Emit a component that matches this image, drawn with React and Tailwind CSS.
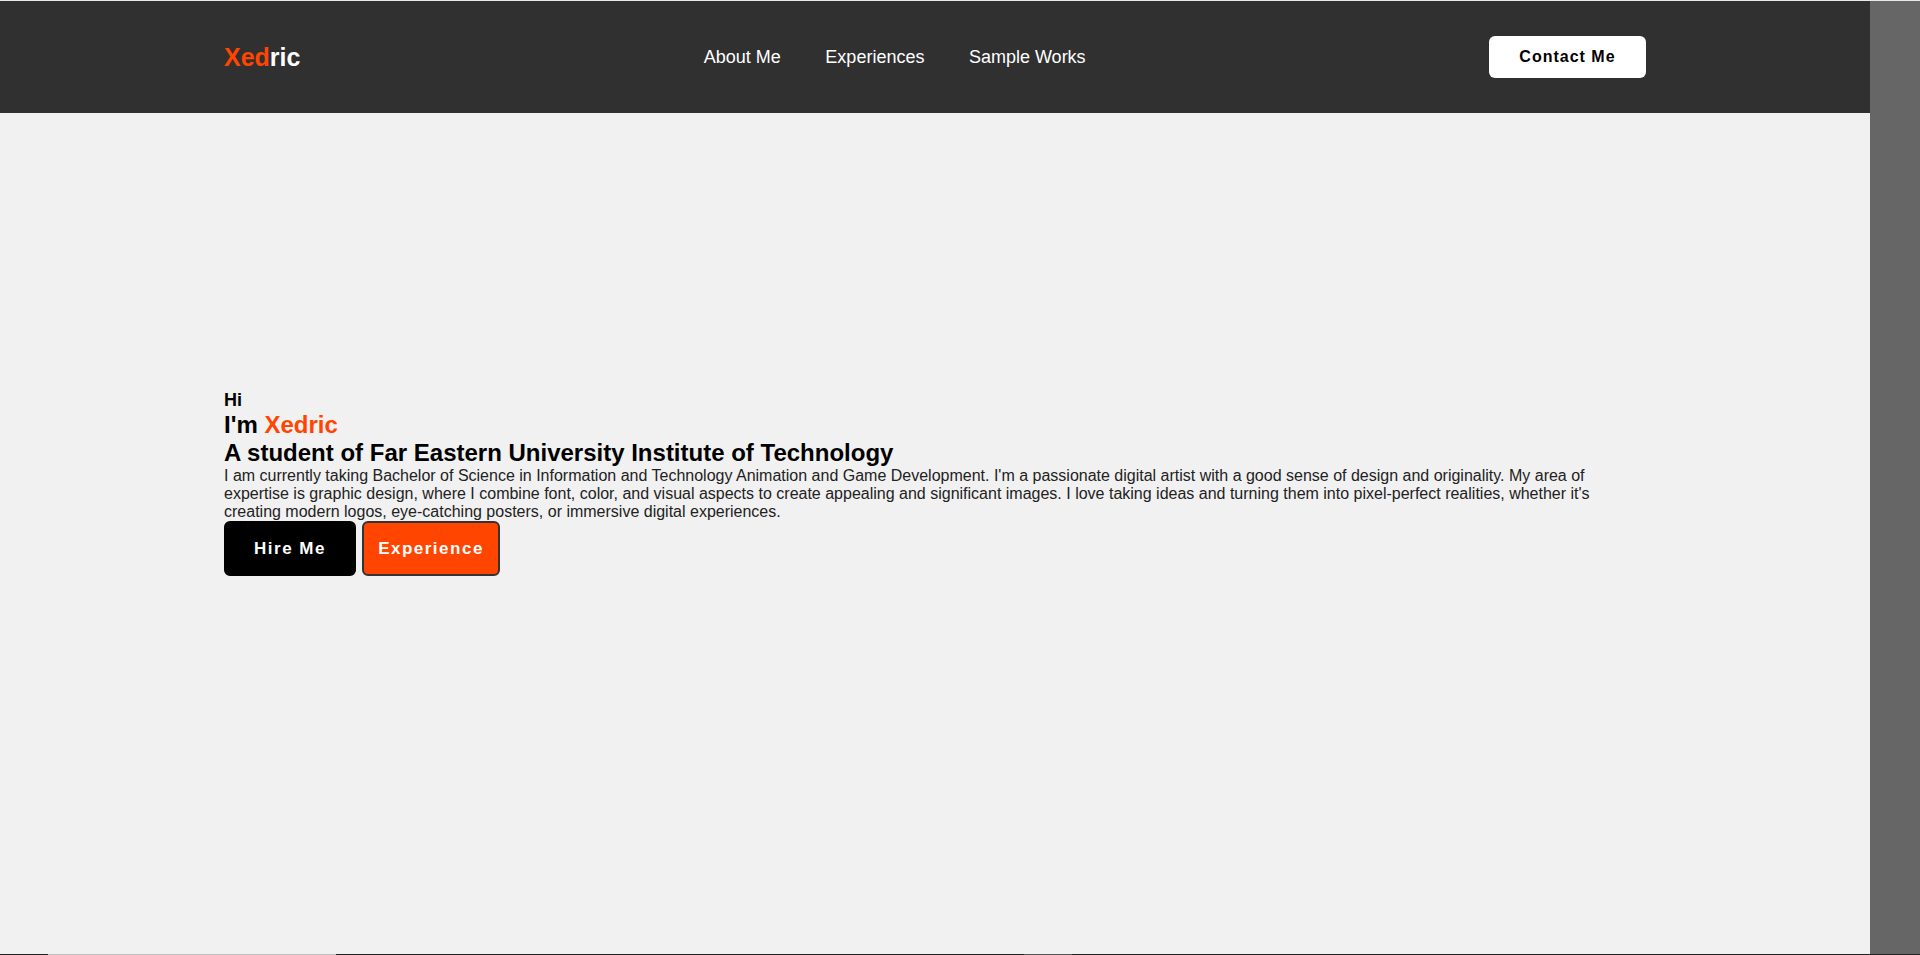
export default function App() {
  const navLinks = ["About Me", "Experiences", "Sample Works"];

  return (
    <div className="flex h-[955px] flex-col overflow-hidden bg-[#f1f1f1] font-['Liberation_Sans',Arial,sans-serif] leading-[normal] text-black">
      {/* thin top edge */}
      <div className="h-px shrink-0 bg-[#e9e9e9]" />

      <div className="flex min-h-0 flex-1">
        <div className="flex min-w-0 flex-1 flex-col">
          {/* HEADER */}
          <header className="h-[112px] shrink-0 bg-[#303030]">
            <div className="mx-auto flex h-full w-[1422px] items-center justify-between">
              <a href="#" className="text-[25px] font-bold text-white">
                <span className="text-[#ff4500]">Xed</span>ric
              </a>

              <nav className="flex items-center gap-[44.5px]">
                {navLinks.map((link) => (
                  <a key={link} href="#" className="text-[18px] text-white">
                    {link}
                  </a>
                ))}
              </nav>

              <button className="flex h-[42px] w-[157px] items-center justify-center rounded-md bg-white text-[16px] font-bold tracking-[1px] text-black">
                Contact Me
              </button>
            </div>
          </header>

          {/* HERO */}
          <main className="flex-1 pt-[277px]">
            <div className="mx-auto w-[1422px]">
              <h3 className="text-[18px] font-bold">Hi</h3>
              <h2 className="text-[24px] font-bold">
                I'm <span className="text-[#ff4500]">Xedric</span>
              </h2>
              <h1 className="text-[24px] font-bold">
                A student of Far Eastern University Institute of Technology
              </h1>
              <p className="text-[16px] text-[#222]">
                I am currently taking Bachelor of Science in Information and
                Technology Animation and Game Development. I'm a passionate
                digital artist with a good sense of design and originality. My
                area of expertise is graphic design, where I combine font, color,
                and visual aspects to create appealing and significant images. I
                love taking ideas and turning them into pixel-perfect realities,
                whether it's creating modern logos, eye-catching posters, or
                immersive digital experiences.
              </p>

              <div className="flex gap-[6px]">
                <button className="flex h-[55px] w-[132px] items-center justify-center rounded-md border-2 border-black bg-black text-[17px] font-bold tracking-[1.5px] text-white">
                  Hire Me
                </button>
                <button className="flex h-[55px] w-[138px] items-center justify-center rounded-md border-2 border-[#333] bg-[#ff4500] text-[17px] font-bold tracking-[1.5px] text-white">
                  Experience
                </button>
              </div>
            </div>
          </main>
        </div>

        {/* side strip */}
        <div className="w-[50px] shrink-0 bg-[#666666]" />
      </div>

      {/* bottom edge */}
      <div className="flex h-px shrink-0 bg-[#202020]">
        <div className="ml-[48px] w-[288px] bg-[#c0c0c0]" />
        <div className="ml-[688px] w-[48px] bg-[#555555]" />
      </div>
    </div>
  );
}
